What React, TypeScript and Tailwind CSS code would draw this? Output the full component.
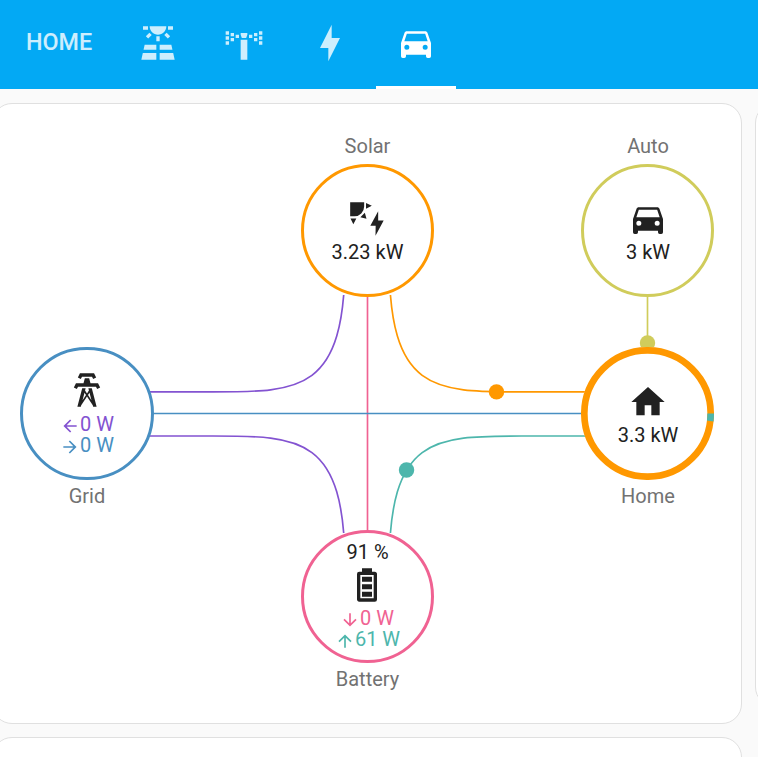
import type { ReactNode } from "react";

const paths = {
  solarPanels:
    "M3.33 16H11V13H4L3.33 16M13 16H20.67L20 13H13V16M21.11 18H13V22H22L21.11 18M2 22H11V18H2.89L2 22M11 8H13V11H11V8M15.76 7.21L17.18 5.79L19.3 7.91L17.89 9.33L15.76 7.21M4.71 7.91L6.83 5.79L8.24 7.21L6.12 9.33L4.71 7.91M3 2H6V4H3V2M18 2H21V4H18V2M12 7C14.76 7 17 4.76 17 2H7C7 4.76 9.24 7 12 7Z",
  sprinkler:
    "M1 5H3V7H1zM1 8H3V10H1zM1 11H3V13H1zM4 6H6V8H4zM4 9H6V11H4zM7 7H9V9H7zM15 7H17V9H15zM18 6H20V8H18zM18 9H20V11H18zM21 5H23V7H21zM21 8H23V10H21zM21 11H23V13H21zM10 6H14V7L13.3 9H10.7L10 7zM10 10H14V22H10z",
  bolt: "M11 15H6L13 1V9H18L11 23V15Z",
  car: "M5,11L6.5,6.5H17.5L19,11M17.5,16A1.5,1.5 0 0,1 16,14.5A1.5,1.5 0 0,1 17.5,13A1.5,1.5 0 0,1 19,14.5A1.5,1.5 0 0,1 17.5,16M6.5,16A1.5,1.5 0 0,1 5,14.5A1.5,1.5 0 0,1 6.5,13A1.5,1.5 0 0,1 8,14.5A1.5,1.5 0 0,1 6.5,16M18.92,6C18.72,5.42 18.16,5 17.5,5H6.5C5.84,5 5.28,5.42 5.08,6L3,12V20A1,1 0 0,0 4,21H5A1,1 0 0,0 6,20V19H18V20A1,1 0 0,0 19,21H20A1,1 0 0,0 21,20V12L18.92,6Z",
  home: "M10,20V14H14V20H19V12H22L12,3L2,12H5V20H10Z",
  tower:
    "M8.28,5.45L6.5,4.55L7.76,2H16.23L17.5,4.55L15.72,5.44L15,4H9L8.28,5.45M18.62,8H14.09L13.3,5H10.7L9.91,8H5.38L4.1,10.55L5.89,11.44L6.62,10H17.38L18.1,11.45L19.89,10.56L18.62,8M17.77,22H15.7L15.46,21.1L12,15.9L8.53,21.1L8.3,22H6.23L9.12,11H11.19L10.83,12.35L12,14.1L13.16,12.35L12.81,11H14.88L17.77,22M11.4,15L10.5,13.65L9.32,18.13L11.4,15M14.68,18.12L13.5,13.64L12.6,15L14.68,18.12Z",
  battery:
    "M16,20H8V6H16M16.67,4H15V2H9V4H7.33A1.33,1.33 0 0,0 6,5.33V20.67C6,21.4 6.6,22 7.33,22H16.67A1.33,1.33 0 0,0 18,20.67V5.33C18,4.6 17.4,4 16.67,4M15,16H9V19H15V16M15,7H9V10H15V7M15,11.5H9V14.5H15V11.5Z",
  sunBolt:
    "M1.9 2H10.3V4.5A5.9 5.9 0 0 1 4.4 10.4H1.9ZM11.4 2.4L14.9 4.1L11.4 5.8ZM2.1 11.7H5.6L3.8 15.2ZM10.7 8.2L11.7 11.9L8 10.9ZM17.2 16H14L18.7 7.4V12.9H22L17.1 22Z",
  left: "M20,11V13H8L13.5,18.5L12.08,19.92L4.16,12L12.08,4.08L13.5,5.5L8,11H20Z",
  right: "M4,11V13H16L10.5,18.5L11.92,19.92L19.84,12L11.92,4.08L10.5,5.5L16,11H4Z",
  down: "M11,4H13V16L18.5,10.5L19.92,11.92L12,19.84L4.08,11.92L5.5,10.5L11,16V4Z",
  up: "M13,20H11V8L5.5,13.5L4.08,12.08L12,4.16L19.92,12.08L18.5,13.5L13,8V20Z",
};

type IconName = keyof typeof paths;

function Icon({ name, className = "size-10" }: { name: IconName; className?: string }) {
  return (
    <svg viewBox="0 0 24 24" fill="currentColor" className={`shrink-0 ${className}`}>
      <path d={paths[name]} />
    </svg>
  );
}

function Tab({ icon, active = false }: { icon: IconName; active?: boolean }) {
  return (
    <div className={`flex h-full w-[86px] flex-col items-center pt-[22.7px] ${active ? "text-white" : "text-white/80"}`}>
      <Icon name={icon} />
      {active && <div className="mt-auto h-[3px] w-20 bg-white" />}
    </div>
  );
}

function Flow({ icon, className, children }: { icon: IconName; className: string; children: ReactNode }) {
  return (
    <div className={`flex h-[21px] items-center leading-[21px] ${className}`}>
      <Icon name={icon} className="mt-[2px] size-5" />
      <span>{children}</span>
    </div>
  );
}

function Circle({ className, children }: { className: string; children: ReactNode }) {
  return (
    <div className={`absolute flex h-[133px] flex-col items-center whitespace-nowrap rounded-full bg-white ${className}`}>
      {children}
    </div>
  );
}

function Label({ className, children }: { className: string; children: ReactNode }) {
  return <div className={`absolute w-[133px] text-center leading-5 text-[#727272] ${className}`}>{children}</div>;
}

function FlowLines() {
  return (
    <svg
      viewBox="0 0.11 100 100"
      preserveAspectRatio="xMidYMid slice"
      fill="none"
      strokeWidth="1.667"
      className="absolute left-[147px] top-[192px] h-[238px] w-[441px] overflow-hidden"
    >
      <path stroke="#8353d1" vectorEffect="non-scaling-stroke" d="M44.9,0 v15.1 c0,30 -10,30 -30,30 h-20" />
      <path stroke="#8353d1" vectorEffect="non-scaling-stroke" d="M44.9,101 v-15.9 c0,-30 -10,-30 -30,-30 h-20" />
      <path stroke="#ff9800" vectorEffect="non-scaling-stroke" d="M54.9,0 v15.1 c0,30 10,30 30,30 h20" />
      <path stroke="#4db6ac" vectorEffect="non-scaling-stroke" d="M54.9,101 v-15.9 c0,-30 10,-30 30,-30 h20" />
      <path stroke="#f06292" vectorEffect="non-scaling-stroke" d="M50,0 V100" />
      <path stroke="#488fc2" vectorEffect="non-scaling-stroke" d="M0,50 H100" />
      <circle cx="79.25" cy="45.1" r="1.75" fill="#ff9800" />
      <circle cx="58.85" cy="62.8" r="1.75" fill="#4db6ac" />
    </svg>
  );
}

export default function App() {
  return (
    <div className="flex h-[757px] w-[758px] flex-col overflow-hidden bg-[#fafafa] font-['Roboto',sans-serif] text-[20px] text-[#212121]">
      <header className="flex h-[89px] shrink-0 bg-[#03a9f4]">
        <div className="flex w-[115px] justify-center pl-[3px] pt-[27px] text-[23.33px] font-medium leading-[30px] text-white/80">
          HOME
        </div>
        <Tab icon="solarPanels" />
        <Tab icon="sprinkler" />
        <Tab icon="bolt" />
        <Tab icon="car" active />
      </header>

      <main className="-ml-2 mt-[14px] flex w-[900px] items-start gap-[13px]">
        <div className="flex w-[750px] shrink-0 flex-col gap-[13px]">
          <section className="h-[621px] rounded-[20px] border border-[#e0e0e0] bg-white">
            {/* Canvas origin sits at the visible left edge and the card's top */}
            <div className="relative -mt-px ml-[7px] h-[620px] w-[742px]">
              <FlowLines />
              <svg className="absolute left-[637px] top-[193px] h-[60px] w-[21px]">
                <path d="M10.5 0V60" stroke="#d0cc5b" strokeWidth="1.667" />
                <circle cx="10.5" cy="47" r="7.67" fill="#d0cc5b" />
              </svg>

              <Label className="left-[301px] top-[33px]">Solar</Label>
              <Circle className="left-[301px] top-[61px] w-[133px] border-[3px] border-[#ff9800] pt-[32px]">
                <Icon name="sunBolt" className="mr-px size-10" />
                <span className="mt-[3px] leading-5">3.23 kW</span>
              </Circle>

              <Label className="left-[581.5px] top-[33px]">Auto</Label>
              <Circle className="left-[581px] top-[61px] w-[133px] border-[3px] border-[#d0cc5b] pl-px pt-[32px]">
                <Icon name="car" />
                <span className="mt-[3px] leading-5">3 kW</span>
              </Circle>

              <Circle className="left-[20px] top-[244px] w-[134px] border-[3px] border-[#488fc2] pt-[20px]">
                <Icon name="tower" />
                <div className="mt-[4px]">
                  <Flow icon="left" className="text-[#8353d1]">0 W</Flow>
                  <Flow icon="right" className="text-[#488fc2]">0 W</Flow>
                </div>
              </Circle>
              <Label className="left-[20.5px] top-[383px]">Grid</Label>

              <Circle className="left-[581px] top-[244px] w-[133px] pl-px pt-[35px]">
                <svg viewBox="0 0 133 133" fill="none" strokeWidth="6.67" className="absolute inset-0 size-full">
                  <circle cx="66.5" cy="66.5" r="63.17" stroke="#ff9800" />
                  <path d="M129.67 66.5A63.17 63.17 0 0 1 129.22 74" stroke="#4db6ac" />
                </svg>
                <Icon name="home" />
                <span className="mt-[3px] leading-5">3.3 kW</span>
              </Circle>
              <Label className="left-[581.5px] top-[383px]">Home</Label>

              <Circle className="left-[301px] top-[427px] w-[133px] border-[3px] border-[#f06292] pt-[9px]">
                <span className="leading-5">91 %</span>
                <Icon name="battery" className="mr-px mt-[3px] size-10" />
                <div className="mt-[3px] flex flex-col items-center">
                  <Flow icon="down" className="pr-px text-[#f06292]">0 W</Flow>
                  <Flow icon="up" className="text-[#4db6ac]">61 W</Flow>
                </div>
              </Circle>
              <Label className="left-[301px] top-[566px]">Battery</Label>
            </div>
          </section>
          <section className="h-[200px] rounded-[20px] border border-[#e0e0e0] bg-white" />
        </div>
        <section className="h-[604px] w-[137px] shrink-0 rounded-[20px] border border-[#e0e0e0] bg-white" />
      </main>
    </div>
  );
}
